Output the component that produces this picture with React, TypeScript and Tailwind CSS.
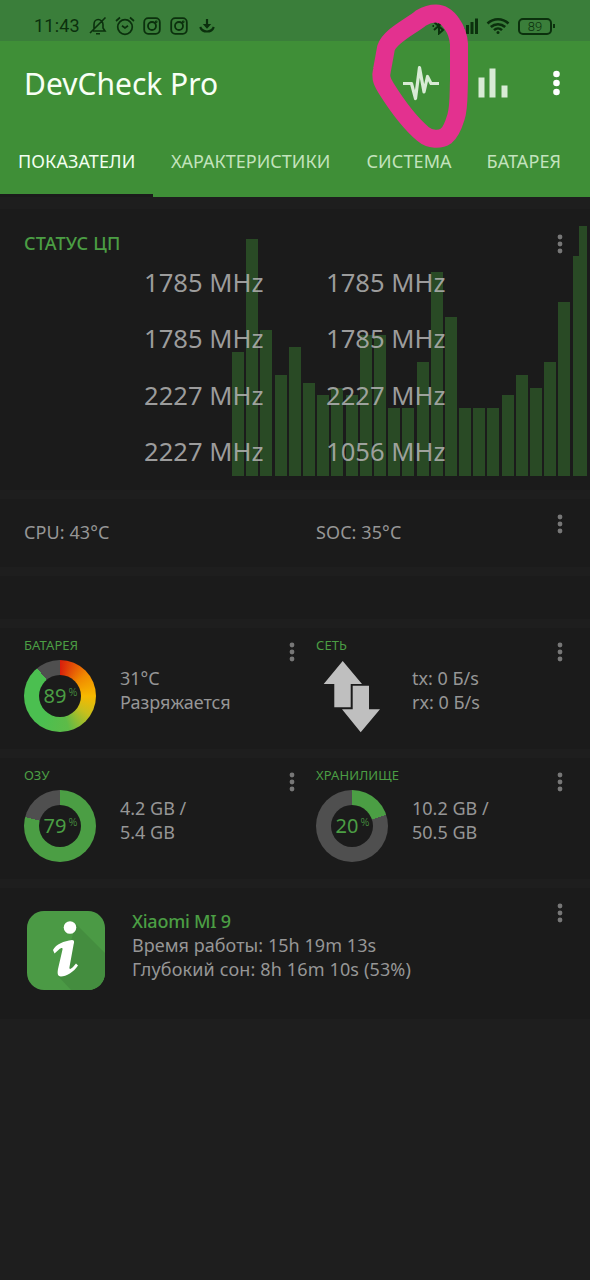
import * as React from "react";

const tabs = ["ПОКАЗАТЕЛИ", "ХАРАКТЕРИСТИКИ", "СИСТЕМА", "БАТАРЕЯ"];

const cores = [
  ["1785 MHz", "1785 MHz"],
  ["1785 MHz", "1785 MHz"],
  ["2227 MHz", "2227 MHz"],
  ["2227 MHz", "1056 MHz"],
];

// load history, newest sample on the right
const history = [
  124, 237, 146, 101.5, 129, 93.5, 81, 88.5, 81, 141, 141, 68, 68, 114, 204.5, 159, 68, 68, 68, 81, 101.5,
  88.5, 114, 174, 220,
];

function MenuDots() {
  return (
    <svg width="6" height="20" viewBox="0 0 6 20" fill="#777777">
      <circle cx="3" cy="3" r="2.4" />
      <circle cx="3" cy="10" r="2.4" />
      <circle cx="3" cy="17" r="2.4" />
    </svg>
  );
}

function Ring({ value, gradient = false }: { value: number; gradient?: boolean }) {
  const fill = gradient
    ? "conic-gradient(#d91e0c 0%, #f08a00 14%, #f7b900 25%, #c8bf1c 34%, #5dbb48 46%, #4bbf50 60%, #4bbf50 89%, #4f4f4f 89%)"
    : `conic-gradient(#4b9e44 ${value}%, #4f4f4f ${value}%)`;
  return (
    <div className="flex size-[72px] shrink-0 items-center justify-center rounded-full" style={{ background: fill }}>
      <div className="flex size-[42px] items-center justify-center rounded-full bg-[#1b1b1b] pl-px text-[#4b9e44]">
        <span className="text-xl leading-none">{value}</span>
        <span className="-mt-[9px] ml-[2px] text-[11px] leading-none font-light">%</span>
      </div>
    </div>
  );
}

function Tile({ title, lines, children }: { title: string; lines: string[]; children: React.ReactNode }) {
  return (
    <div className="flex h-full flex-1 justify-between">
      <div>
        <h2 className="mt-2 text-[13px] leading-[18px] tracking-[0.1px] text-[#4b9e44]">{title}</h2>
        <div className="mt-[6px] flex">
          {children}
          <div className="mt-[6px] ml-6 text-lg leading-6 whitespace-nowrap">
            {lines.map((line) => (
              <p key={line}>{line}</p>
            ))}
          </div>
        </div>
      </div>
      <div className="mt-[14px]">
        <MenuDots />
      </div>
    </div>
  );
}

function NetworkArrows() {
  return (
    <svg width="72" height="73" viewBox="0 0 72 73" fill="#bfbfbf" className="shrink-0">
      <path d="M26.7 1L46 24H34.7V47.3H18.3V24H7.7Z" />
      <path d="M36.7 25.7H53V49.3H64L44.7 72.3L26 49.3H36.7Z" />
    </svg>
  );
}

function StatusBar() {
  return (
    <div className="flex h-[41px] items-start justify-between bg-[#3a7e3a] pt-4 pr-[35px] pl-[34px] text-[#0b300d]">
      <div className="flex h-5 items-center">
        <span className="w-[46px] font-[Roboto] text-lg leading-5 tracking-[0.2px]">11:43</span>
        <svg className="ml-2" width="20" height="20" viewBox="0 0 20 20" fill="none" stroke="currentColor" strokeWidth="1.6">
          <path d="M2 17L17.5 1.5M6 13.5V8.5C6 5.5 8 3.5 10.2 3.5S15 5.5 15 8.5V12L17 15H5M8 17.8H12" />
        </svg>
        <svg className="ml-[7px]" width="20" height="20" viewBox="0 0 20 20" fill="none" stroke="currentColor" strokeWidth="1.7">
          <circle cx="10" cy="11" r="7.3" />
          <path d="M1 5L5 1.5M15 1.5L19 5M7 9.8L10 12L13 9.8" />
        </svg>
        {[0, 1].map((i) => (
          <svg key={i} className={i ? "ml-[9px]" : "ml-2"} width="18" height="18" viewBox="0 0 18 18" fill="none" stroke="currentColor" strokeWidth="1.8">
            <rect x="1.2" y="1.2" width="15.6" height="15.6" rx="4" />
            <circle cx="9" cy="9" r="4" />
            <circle cx="13.2" cy="4.8" r="0.5" />
          </svg>
        ))}
        <svg className="ml-[11px]" width="16" height="16" viewBox="0 0 16 16" fill="none" stroke="currentColor" strokeWidth="2.2">
          <path d="M8 1V9M1.2 9C3.5 15 12.5 15 14.8 9" />
          <path d="M3.8 6H12.2L8 10.8Z" fill="currentColor" stroke="none" />
        </svg>
      </div>
      <div className="flex h-5 items-center">
        <svg width="14" height="18" viewBox="0 0 14 18" fill="none" stroke="currentColor" strokeWidth="2">
          <path d="M2 5L11 13L7 16.5V1.5L11 5L2 13M0.5 9H2M12 9H13.5" />
        </svg>
        <svg className="ml-[14px]" width="18" height="16" viewBox="0 0 18 16" fill="currentColor">
          <path d="M1.5 10H4.5V16H1.5ZM6 7H9V16H6ZM10.5 4H13.5V16H10.5ZM15 0.5H18V16H15Z" />
        </svg>
        <svg className="ml-2" width="24" height="18" viewBox="0 0 24 18" fill="none" stroke="currentColor" strokeWidth="2.5">
          <path d="M1.5 6.5C7.5 0.8 16.5 0.8 22.5 6.5M4.8 10C9 6.2 15 6.2 19.2 10M8 13.2C10.3 11 13.7 11 16 13.2" />
          <circle cx="12" cy="15.6" r="1.5" fill="currentColor" stroke="none" />
        </svg>
        <div className="ml-2 flex h-[17px] w-[34px] items-center justify-center rounded-[5px] border-2 border-current font-[Roboto] text-[13px] leading-none font-light">
          89
        </div>
        <div className="ml-px h-1 w-[2px] bg-current" />
      </div>
    </div>
  );
}

function Header() {
  return (
    <header className="flex h-[156px] flex-col bg-[#3f8f37]">
      <div className="flex h-[84px] items-center justify-between pr-[30px] pl-6">
        <h1 className="pt-[2px] text-[30px] leading-none text-[#f7fff5]">DevCheck Pro</h1>
        <div className="flex items-center">
          <svg width="36" height="36" viewBox="0 0 36 36" fill="none" stroke="#d8ebd5" strokeWidth="3.2" strokeLinejoin="round">
            <path d="M0 18.5H8.5L12.5 33.5L16.5 2.5L21 27L24.5 11.5L28 18.5H36" />
          </svg>
          <svg className="ml-[39px]" width="30" height="30" viewBox="0 0 30 30" fill="#d8ebd5">
            <path d="M0.5 9.5H6.5V29.5H0.5ZM11.5 0.5H17.5V29.5H11.5ZM23.5 17.5H29.5V29.5H23.5Z" />
          </svg>
          <svg className="ml-[45px]" width="7" height="26" viewBox="0 0 7 26" fill="#ffffff">
            <circle cx="3.5" cy="4" r="3.3" />
            <circle cx="3.5" cy="13" r="3.3" />
            <circle cx="3.5" cy="22" r="3.3" />
          </svg>
        </div>
      </div>
      <nav className="flex flex-1 text-lg leading-6 text-[#c3e3bd]">
        {tabs.map((tab, i) => (
          <a
            key={tab}
            className={
              i === 0
                ? "w-[153px] shrink-0 border-b-[3px] border-[#1b1b1b] pt-6 pl-[18px] tracking-[0.1px] text-[#f2fff0]"
                : i === 1
                  ? "ml-[18px] w-[195.5px] shrink-0 pt-6"
                  : "w-[120px] shrink-0 pt-6 tracking-[0.1px]"
            }
          >
            {tab}
          </a>
        ))}
      </nav>
    </header>
  );
}

export default function App() {
  return (
    <div className="relative h-[1280px] w-[590px] overflow-hidden bg-[#1e1e1e] font-['Noto_Sans',sans-serif] text-[#969696]">
      <StatusBar />
      <Header />

      <main className="flex flex-col gap-[9px] pt-3">
        <section className="relative h-[281px] bg-[#1b1b1b] px-6">
          <div className="absolute right-[3px] bottom-[14px] flex h-[250px] items-end gap-[2.2px]">
            {history.map((h, i) => (
              <div key={i} className={i === 24 ? "w-[6.4px] bg-[#294a25]" : "w-3 bg-[#294a25]"} style={{ height: h }} />
            ))}
            <div className="-ml-[2.2px] h-[250px] w-2 bg-[#294a25]" />
          </div>
          <div className="relative flex justify-between pt-[22px]">
            <h2 className="text-lg leading-6 font-medium tracking-[0.2px] text-[#4b9e44]">СТАТУС ЦП</h2>
            <div className="mt-[3px] mr-[3px]">
              <MenuDots />
            </div>
          </div>
          <div className="relative ml-[120px] grid w-[364px] grid-cols-2 text-[25.6px] leading-[56.4px] text-[#b4b4b4]/85">
            {cores.flat().map((freq, i) => (
              <span key={i}>{freq}</span>
            ))}
          </div>
        </section>

        <section className="flex h-[68px] bg-[#1b1b1b] px-6 text-lg leading-[66px] tracking-[0.1px]">
          <span className="w-[292px]">CPU: 43°C</span>
          <span className="flex-1">SOC: 35°C</span>
          <div className="mt-[15px] mr-[3px]">
            <MenuDots />
          </div>
        </section>

        <section className="h-[43px] bg-[#1b1b1b]" />

        <section className="flex h-[121px] bg-[#1b1b1b] pr-[27px] pl-6">
          <div className="mr-[21px] flex w-[271px]">
            <Tile title="БАТАРЕЯ" lines={["31°C", "Разряжается"]}>
              <Ring value={89} gradient />
            </Tile>
          </div>
          <Tile title="СЕТЬ" lines={["tx: 0 Б/s", "rx: 0 Б/s"]}>
            <NetworkArrows />
          </Tile>
        </section>

        <section className="flex h-[121px] bg-[#1b1b1b] pr-[27px] pl-6">
          <div className="mr-[21px] flex w-[271px]">
            <Tile title="ОЗУ" lines={["4.2 GB /", "5.4 GB"]}>
              <Ring value={79} />
            </Tile>
          </div>
          <Tile title="ХРАНИЛИЩЕ" lines={["10.2 GB /", "50.5 GB"]}>
            <Ring value={20} />
          </Tile>
        </section>

        <section className="flex h-[131px] bg-[#1b1b1b] pr-[27px] pl-[27px]">
          <svg className="mt-[23px] shrink-0" width="78" height="79" viewBox="0 0 78 79">
            <rect width="78" height="79" rx="17" fill="#4b9a45" />
            <path d="M49 13L78 42V62C78 71 71 79 61 79H44L31 65L41 40Z" fill="#448d3f" />
            <circle cx="43" cy="16.5" r="6.3" fill="#ffffff" />
            <path
              d="M26 39C29 33 37 30 45 29C48 29 47 32 46.5 34L42.5 56C42 59 44 58 46 56L49 52.5L51 54.5C47 61 39 65.5 34 65.5C30 65.5 30.5 61 31 58L35.5 38.5C36 36.5 34 36.5 32 38.5L27.5 42.5Z"
              fill="#ffffff"
            />
          </svg>
          <div className="mt-[21px] ml-[27px] flex-1 text-lg leading-6">
            <h2 className="font-medium tracking-[-0.25px] text-[#4b9e44]">Xiaomi MI 9</h2>
            <p className="tracking-[0.05px]">Время работы: 15h 19m 13s</p>
            <p className="tracking-[0.14px]">Глубокий сон: 8h 16m 10s (53%)</p>
          </div>
          <div className="mt-[15px]">
            <MenuDots />
          </div>
        </section>
      </main>

      {/* hand-drawn marker around the monitor icon */}
      <svg className="pointer-events-none absolute top-0 left-[360px]" width="120" height="150" viewBox="0 0 120 150" fill="none">
        <path
          d="M76 13.5C83 13.5 88 18 92 24C97 31 98.5 37 99 44V80C98.5 95 99 108 96 117C93 127 90 133 86 136C80 140 70 140 63 134C50 123 36 104 26 88C21 80 20.5 76 22 70L26 48C30 36 50 27 61 18C66 15 71 13.5 76 13.5Z"
          stroke="#e3318f"
          strokeWidth="18"
          strokeLinejoin="round"
        />
      </svg>
    </div>
  );
}
